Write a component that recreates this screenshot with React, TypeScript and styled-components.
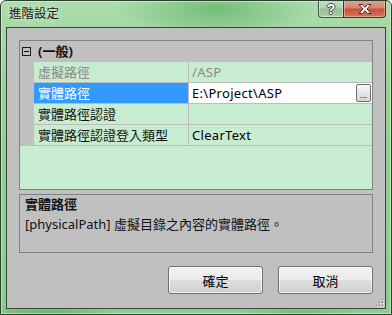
import React from "react";
import styled, { createGlobalStyle } from "styled-components";

const uiFont = `"Noto Sans", "Noto Sans CJK TC", sans-serif`;

const GlobalStyle = createGlobalStyle`
  html, body {
    margin: 0;
    padding: 0;
    background: #ffffff;
  }
  body {
    font-family: ${uiFont};
  }
`;

type Prop = {
  name: string;
  value: string;
  readOnly?: boolean;
  selected?: boolean;
  browse?: boolean;
};

const props: Prop[] = [
  { name: "虛擬路徑", value: "/ASP", readOnly: true },
  { name: "實體路徑", value: "E:\\Project\\ASP", selected: true, browse: true },
  { name: "實體路徑認證", value: "" },
  { name: "實體路徑認證登入類型", value: "ClearText" },
];

const CloseGlyph = () => (
  <svg width="16" height="12" viewBox="0 0 16 12">
    <path
      d="M2 1.5 L5.5 1.5 L8 4.3 L10.5 1.5 L14 1.5 L10 6 L14 10.5 L10.5 10.5 L8 7.7 L5.5 10.5 L2 10.5 L6 6 Z"
      fill="#ffffff"
      stroke="#4a2a22"
      strokeWidth="1"
      strokeLinejoin="round"
    />
  </svg>
);

const Grip = () => (
  <svg width="9" height="9" viewBox="0 0 9 9">
    {[
      [7, 1],
      [4, 4],
      [7, 4],
      [1, 7],
      [4, 7],
      [7, 7],
    ].map(([x, y]) => (
      <g key={`${x}-${y}`}>
        <rect x={x + 1} y={y + 1} width="1" height="1" fill="#ffffff" />
        <rect x={x} y={y} width="1" height="1" fill="#7a7a7a" />
      </g>
    ))}
  </svg>
);

export default function App() {
  return (
    <>
      <GlobalStyle />
      <Window>
        <TitleBar>
          <Title>進階設定</Title>
          <CaptionButtons>
            <HelpButton>?</HelpButton>
            <CloseButton>
              <CloseGlyph />
            </CloseButton>
          </CaptionButtons>
        </TitleBar>
        <Client>
          <PropertyGrid>
            <CategoryRow>
              <Toggle />
              <CategoryLabel>(一般)</CategoryLabel>
            </CategoryRow>
            {props.map((p) => (
              <PropRow key={p.name}>
                <Gutter />
                <NameCell $selected={p.selected} $readOnly={p.readOnly}>
                  {p.name}
                </NameCell>
                <ValueCell $selected={p.selected} $readOnly={p.readOnly}>
                  <span>{p.value}</span>
                  {p.browse && <BrowseButton>...</BrowseButton>}
                </ValueCell>
              </PropRow>
            ))}
            <GridFill />
          </PropertyGrid>
          <DescPanel>
            <DescTitle>實體路徑</DescTitle>
            <DescText>[physicalPath] 虛擬目錄之內容的實體路徑。</DescText>
          </DescPanel>
          <ButtonRow>
            <DialogButton>確定</DialogButton>
            <DialogButton>取消</DialogButton>
          </ButtonRow>
          <GripCorner>
            <Grip />
          </GripCorner>
        </Client>
      </Window>
    </>
  );
}

const Window = styled.div`
  width: 392px;
  height: 315px;
  box-sizing: border-box;
  border: 1px solid #2c3f2f;
  border-radius: 6px 6px 0 0;
  overflow: hidden;
  display: flex;
  flex-direction: column;
  box-shadow: inset 0 0 0 1px rgba(235, 255, 235, 0.5);
  background:
    radial-gradient(ellipse 100px 30px at 215px 8px, rgba(80, 170, 85, 0.6), transparent),
    radial-gradient(ellipse 70px 10px at 45px 312px, rgba(80, 165, 85, 0.6), transparent),
    radial-gradient(ellipse 60px 10px at 300px 312px, rgba(80, 165, 85, 0.4), transparent),
    linear-gradient(to bottom, #acdcac 0%, #96d097 30%, #8ccc8e 100%);
`;

const TitleBar = styled.div`
  height: 26px;
  display: flex;
  align-items: flex-start;
  padding-left: 8px;
`;

const Title = styled.div`
  font-family: ${uiFont};
  font-size: 12.5px;
  line-height: 26px;
  color: #1b1b1b;
  text-shadow: 0 0 6px rgba(255, 255, 255, 0.8);
`;

const CaptionButtons = styled.div`
  margin-left: auto;
  margin-right: 5px;
  margin-top: -1px;
  display: flex;
`;

const HelpButton = styled.div`
  width: 25px;
  height: 18px;
  box-sizing: border-box;
  border: 1px solid #3f5442;
  border-right: none;
  border-top: none;
  border-radius: 0 0 0 4px;
  background: linear-gradient(to bottom, #c9e0c9 0%, #b3cfb3 48%, #98bd98 52%, #a9cda9 100%);
  box-shadow: inset 0 0 0 1px rgba(255, 255, 255, 0.45);
  display: flex;
  align-items: center;
  justify-content: center;
  font-family: "Liberation Sans", sans-serif;
  font-weight: bold;
  font-size: 14px;
  color: #ffffff;
  text-shadow: 1px 0 0 #3a4a3c, -1px 0 0 #3a4a3c, 0 1px 0 #3a4a3c, 0 -1px 0 #3a4a3c;
`;

const CloseButton = styled.div`
  width: 43px;
  height: 18px;
  box-sizing: border-box;
  border: 1px solid #4a2a24;
  border-top: none;
  border-radius: 0 0 4px 0;
  background: linear-gradient(to bottom, #e4a593 0%, #d8846c 45%, #c4523a 55%, #d37858 100%);
  box-shadow: inset 0 0 0 1px rgba(255, 220, 210, 0.45);
  display: flex;
  align-items: center;
  justify-content: center;
`;

const Client = styled.div`
  flex: 1;
  position: relative;
  margin: 0 5px 5px 5px;
  border: 1px solid #35483a;
  background: #c0c0c0;
  display: flex;
  flex-direction: column;
  padding: 12px 12px 0 12px;
  font-family: ${uiFont};
  font-size: 13px;
`;

const PropertyGrid = styled.div`
  height: 150px;
  box-sizing: border-box;
  border: 1px solid #828282;
  background: #c8ecd0;
  display: flex;
  flex-direction: column;
`;

const CategoryRow = styled.div`
  height: 21px;
  flex-shrink: 0;
  background: #c0c0c0;
  display: flex;
  align-items: center;
`;

const Toggle = styled.div`
  width: 9px;
  height: 9px;
  box-sizing: border-box;
  margin-left: 2px;
  border: 1px solid #1a1a1a;
  background: #c0c0c0;
  position: relative;
  &::after {
    content: "";
    position: absolute;
    left: 1px;
    right: 1px;
    top: 3px;
    height: 1px;
    background: #000000;
  }
`;

const CategoryLabel = styled.div`
  margin-left: 7px;
  font-weight: bold;
  color: #141414;
  line-height: 21px;
`;

const PropRow = styled.div`
  height: 21px;
  flex-shrink: 0;
  display: flex;
`;

const Gutter = styled.div`
  width: 14px;
  background: #c0c0c0;
`;

const NameCell = styled.div<{ $selected?: boolean; $readOnly?: boolean }>`
  width: 155px;
  box-sizing: border-box;
  padding-left: 4px;
  border-right: 1px solid #bcbcbc;
  border-bottom: 1px solid #bcbcbc;
  line-height: 20px;
  white-space: nowrap;
  background: ${(p) => (p.$selected ? "#3399ff" : "transparent")};
  color: ${(p) => (p.$selected ? "#ffffff" : p.$readOnly ? "#8a8a8a" : "#111111")};
`;

const ValueCell = styled.div<{ $selected?: boolean; $readOnly?: boolean }>`
  flex: 1;
  box-sizing: border-box;
  padding-left: 3px;
  border-bottom: 1px solid #bcbcbc;
  display: flex;
  align-items: center;
  line-height: 20px;
  background: ${(p) => (p.$selected ? "#ffffff" : "transparent")};
  color: ${(p) => (p.$readOnly ? "#8a8a8a" : "#000000")};
  span {
    flex: 1;
    letter-spacing: 0.3px;
  }
`;

const BrowseButton = styled.div`
  width: 15px;
  height: 18px;
  box-sizing: border-box;
  margin-right: 1px;
  border: 1px solid #707070;
  border-radius: 2px;
  background: linear-gradient(to bottom, #f7f7f7 0%, #e6e6e6 50%, #d8d8d8 100%);
  font-family: "Liberation Sans", sans-serif;
  font-size: 9px;
  line-height: 20px;
  text-align: center;
  color: #000000;
  overflow: hidden;
`;

const GridFill = styled.div`
  flex: 1;
`;

const DescPanel = styled.div`
  margin-top: 4px;
  height: 59px;
  box-sizing: border-box;
  border: 1px solid #828282;
  padding: 1px 5px 0;
`;

const DescTitle = styled.div`
  font-weight: bold;
  line-height: 16px;
  color: #111111;
`;

const DescText = styled.div`
  margin-top: 4px;
  line-height: 16px;
  color: #111111;
`;

const ButtonRow = styled.div`
  margin-top: 13px;
  display: flex;
  justify-content: flex-end;
  gap: 15px;
`;

const DialogButton = styled.div`
  width: 95px;
  height: 28px;
  box-sizing: border-box;
  border: 1px solid #707070;
  border-radius: 3px;
  background: linear-gradient(to bottom, #f2f2f2 0%, #ebebeb 48%, #dddddd 52%, #cfcfcf 100%);
  box-shadow: inset 0 0 0 1px rgba(255, 255, 255, 0.7);
  display: flex;
  align-items: center;
  justify-content: center;
  color: #000000;
`;

const GripCorner = styled.div`
  position: absolute;
  right: 1px;
  bottom: 1px;
  width: 9px;
  height: 9px;
  line-height: 0;
`;
